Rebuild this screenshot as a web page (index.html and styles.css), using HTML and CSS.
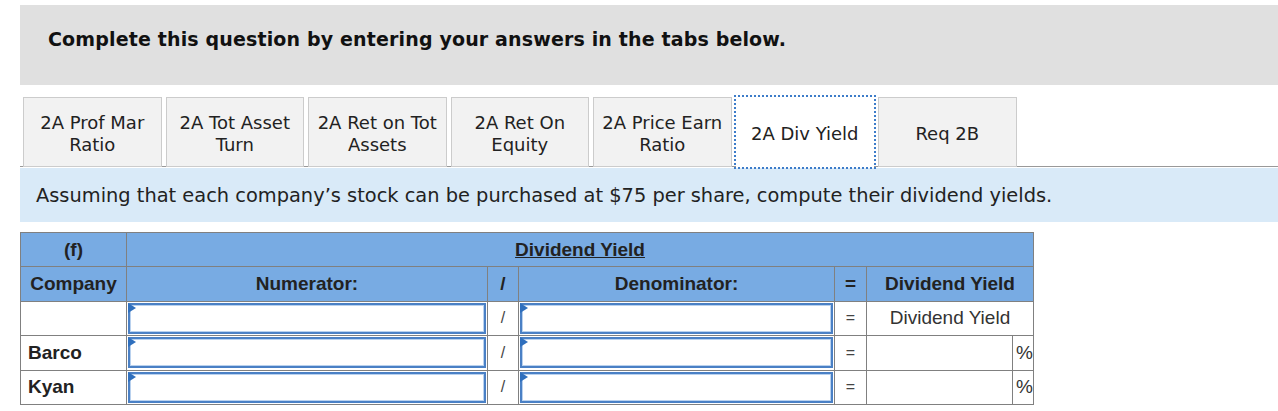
FILE: index.html
```html
<!DOCTYPE html>
<html lang="en">
<head>
    <meta charset="UTF-8">
    <title>Dividend Yield</title>
    <link rel="stylesheet" href="styles.css">
</head>
<body>
    <div class="page">
        <div class="banner">
            <h3>Complete this question by entering your answers in the tabs below.</h3>
        </div>

        <div class="tabs">
            <button class="tab">2A Prof Mar<br>Ratio</button>
            <button class="tab">2A Tot Asset<br>Turn</button>
            <button class="tab">2A Ret on Tot<br>Assets</button>
            <button class="tab">2A Ret On<br>Equity</button>
            <button class="tab">2A Price Earn<br>Ratio</button>
            <button class="tab active">2A Div Yield</button>
            <button class="tab">Req 2B</button>
        </div>

        <div class="prompt">
            Assuming that each company’s stock can be purchased at $75 per share, compute their dividend yields.
        </div>

        <table class="grid">
            <colgroup>
                <col class="c-company">
                <col class="c-num">
                <col class="c-op">
                <col class="c-den">
                <col class="c-eq">
                <col class="c-result">
                <col class="c-pct">
            </colgroup>
            <tr class="head">
                <th>(f)</th>
                <th colspan="6"><u>Dividend Yield</u></th>
            </tr>
            <tr class="head">
                <th>Company</th>
                <th>Numerator:</th>
                <th>/</th>
                <th>Denominator:</th>
                <th>=</th>
                <th colspan="2">Dividend Yield</th>
            </tr>
            <tr>
                <td></td>
                <td class="entry"><span class="flag"></span><input type="text"></td>
                <td class="op">/</td>
                <td class="entry"><span class="flag"></span><input type="text"></td>
                <td class="op">=</td>
                <td class="label" colspan="2">Dividend Yield</td>
            </tr>
            <tr>
                <td class="name">Barco</td>
                <td class="entry"><span class="flag"></span><input type="text"></td>
                <td class="op">/</td>
                <td class="entry"><span class="flag"></span><input type="text"></td>
                <td class="op">=</td>
                <td></td>
                <td class="pct">%</td>
            </tr>
            <tr>
                <td class="name">Kyan</td>
                <td class="entry"><span class="flag"></span><input type="text"></td>
                <td class="op">/</td>
                <td class="entry"><span class="flag"></span><input type="text"></td>
                <td class="op">=</td>
                <td></td>
                <td class="pct">%</td>
            </tr>
        </table>
    </div>
</body>
</html>
```

FILE: styles.css
```css
body {
    margin: 0;
    background-color: white;
    font-family: "DejaVu Sans", Verdana, sans-serif;
    color: #222;
}
.page {
    padding: 5px 0 0 20px;
}
.banner {
    display: flex;
    align-items: center;
    height: 80px;
    padding-left: 28px;
    background-color: #e0e0e0;
}
.banner h3 {
    margin: 0 0 12px 0;
    font-size: 19px;
    letter-spacing: 0.15px;
    font-weight: bold;
    color: #111;
}
.tabs {
    display: flex;
    gap: 4px;
    margin-top: 12px;
    padding-left: 3px;
    border-bottom: 1px solid #999;
}
.tab {
    width: 138.5px;
    height: 70px;
    margin-bottom: -1px;
    padding: 4px 0 0 0;
    border: 1px solid #ccc;
    background-color: #f2f2f2;
    font-family: "DejaVu Sans", Verdana, sans-serif;
    font-size: 18px;
    line-height: 22px;
    color: #222;
    cursor: pointer;
}
.tab.active {
    background-color: white;
    border-color: white;
    outline: 2px dotted #3d7cc9;
    outline-offset: 0;
}
.prompt {
    margin-top: 1px;
    height: 54px;
    padding-left: 16px;
    display: flex;
    align-items: center;
    background-color: #d9eaf8;
    font-size: 19.4px;
    color: #222;
}
.grid {
    margin-top: 10px;
    border-collapse: collapse;
    font-family: "Liberation Sans", Arial, sans-serif;
    font-size: 19px;
    color: #222;
}
.grid th,
.grid td {
    border: 1px solid #808080;
    height: 33.4px;
    padding: 0;
}
.c-company { width: 106px; }
.c-num { width: 361px; }
.c-op { width: 31px; }
.c-den { width: 316px; }
.c-eq { width: 32px; }
.c-result { width: 146px; }
.c-pct { width: 21px; }
.head th {
    background-color: #78abe3;
    font-weight: bold;
    text-align: center;
}
.name {
    font-weight: bold;
    padding-left: 7px !important;
}
.op {
    text-align: center;
    font-size: 16px;
    color: #444;
}
.label {
    text-align: center;
    color: #333;
}
.pct {
    text-align: right;
    color: #333;
}
.entry {
    position: relative;
}
.entry input {
    display: block;
    box-sizing: border-box;
    width: calc(100% - 2px);
    height: 31px;
    margin: 1px;
    border: 2px solid #4a80c5;
    box-shadow: inset 0 0 0 1px #b9d1ee;
    background-color: white;
    outline: none;
}
.flag {
    position: absolute;
    z-index: 1;
    top: 1px;
    left: 1px;
    width: 0;
    height: 0;
    border-top: 5px solid transparent;
    border-bottom: 5px solid transparent;
    border-left: 8px solid #2f6fbd;
}
```
